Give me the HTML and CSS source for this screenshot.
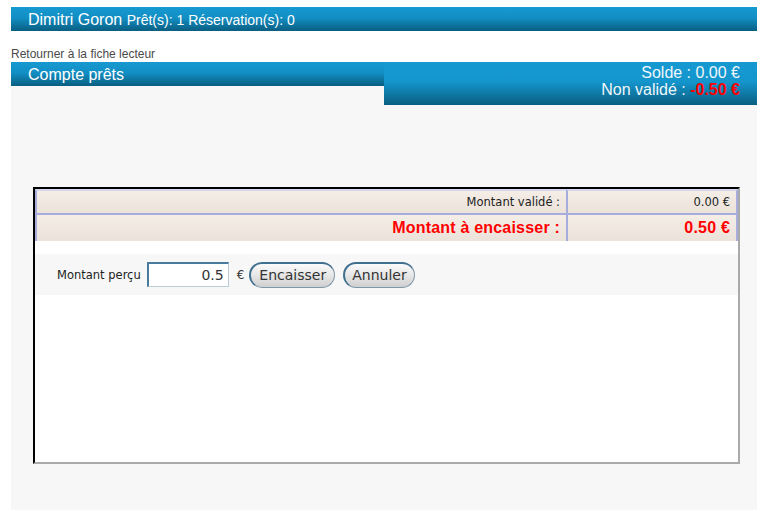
FILE: index.html
```html
<!DOCTYPE html>
<html lang="fr">
<head>
<meta charset="utf-8">
<title>Compte prêts</title>
<link rel="stylesheet" href="styles.css">
</head>
<body>
<div class="page">
  <div class="topbar"><span class="name">Dimitri Goron</span> <span class="counts">Prêt(s): 1 Réservation(s): 0</span></div>
  <div class="back">Retourner à la fiche lecteur</div>
  <div class="header-row">
    <div class="title">Compte prêts</div>
    <div class="solde">
      <div>Solde : 0.00 €</div>
      <div>Non validé : <span class="neg">-0.50 €</span></div>
    </div>
  </div>
  <div class="content">
    <div class="dialog">
      <table class="sums">
        <tr class="r1">
          <td class="lbl">Montant validé :</td>
          <td class="val last">0.00 €</td>
        </tr>
        <tr class="r2">
          <td class="lbl">Montant à encaisser :</td>
          <td class="val last">0.50 €</td>
        </tr>
      </table>
      <div class="band">
        <span class="band-label">Montant perçu</span>
        <input class="amount" type="text" value="0.5">
        <span class="euro">€</span>
        <button class="btn">Encaisser</button>
        <button class="btn btn-cancel">Annuler</button>
      </div>
    </div>
  </div>
</div>
</body>
</html>
```

FILE: styles.css
```css
html, body {
  margin: 0;
  padding: 0;
  background: #ffffff;
}

.page {
  width: 746px;
  padding: 7px 11px 0 11px;
  font-family: "DejaVu Sans", sans-serif;
}

.topbar {
  height: 22px;
  padding: 2px 0 0 17px;
  line-height: 22px;
  color: #ffffff;
  font-family: "Liberation Sans", Arial, sans-serif;
  background: linear-gradient(#1699d1, #128fc4 45%, #0a5e81);
  white-space: nowrap;
}

.name {
  font-size: 16px;
}

.counts {
  font-size: 14px;
}

.back {
  margin-top: 15px;
  line-height: 16px;
  font-size: 12px;
  color: #4a4a4a;
  font-family: "Liberation Sans", Arial, sans-serif;
}

.header-row {
  display: flex;
  align-items: flex-start;
  background: #f7f7f7;
  font-family: "Liberation Sans", Arial, sans-serif;
  color: #ffffff;
  font-size: 16px;
}

.title {
  width: 356px;
  height: 23px;
  padding: 1px 0 0 17px;
  line-height: 23px;
  background: linear-gradient(#1699d1, #128fc4 45%, #0a5e81);
}

.solde {
  width: 356px;
  height: 41px;
  padding: 2px 17px 0 0;
  line-height: 17px;
  text-align: right;
  color: #eef7fb;
  background: linear-gradient(#1699d1, #1496cd 45%, #0a5e81);
}

.neg {
  color: #ff0000;
  font-weight: bold;
}

.content {
  background: #f7f7f7;
  padding: 82px 17px 46px 22px;
}

.dialog {
  width: 703px;
  height: 273px;
  background: #ffffff;
  border-style: solid;
  border-width: 2px;
  border-color: #000000 #aaaaaa #aaaaaa #000000;
}

.sums {
  width: 703px;
  border-collapse: separate;
  border-spacing: 0;
}

.sums td {
  padding: 0 6px 0 0;
  text-align: right;
  border-left: 2px solid #a6addd;
  background: linear-gradient(#f5eee6, #ebe2da);
}

.sums td.last {
  border-right: 2px solid #a6addd;
}

.sums .lbl {
  width: 523px;
}

.r1 td {
  height: 22px;
  border-top: 2px solid #d6d8ee;
  font-size: 11.5px;
  color: #222222;
}

.r2 td {
  height: 26px;
  border-top: 2px solid #a6addd;
  color: #ff0000;
  font-family: "Liberation Sans", Arial, sans-serif;
  font-weight: bold;
  font-size: 16px;
  letter-spacing: 0.2px;
}

.band {
  margin-top: 13px;
  height: 41px;
  display: flex;
  align-items: center;
  padding-left: 22px;
  background: #f7f7f7;
}

.band-label {
  font-size: 11.5px;
  color: #222222;
}

.amount {
  box-sizing: border-box;
  width: 82px;
  height: 25px;
  margin: 0 0 0 6px;
  padding: 0 4px 0 0;
  text-align: right;
  font-family: "DejaVu Sans", sans-serif;
  font-size: 14px;
  color: #333333;
  background: #ffffff;
  border-style: solid;
  border-width: 2px 1px 1px 2px;
  border-color: #4a7b9d #b9ccd8 #b9ccd8 #4a7b9d;
  outline: none;
}

.euro {
  margin: 0 5px 0 8px;
  font-size: 12px;
  color: #333333;
}

.btn {
  box-sizing: border-box;
  height: 26px;
  padding: 0 8px;
  font-family: "DejaVu Sans", sans-serif;
  font-size: 14px;
  color: #333333;
  border-radius: 13px;
  border-style: solid;
  border-width: 2px 1px 1px 2px;
  border-color: #3f6f8f #7d98ab #7d98ab #3f6f8f;
  background: linear-gradient(#fbfbfb, #e6e6e6 50%, #cfcfcf);
}

.btn-cancel {
  margin-left: 8px;
  padding: 0 7px;
}
```
